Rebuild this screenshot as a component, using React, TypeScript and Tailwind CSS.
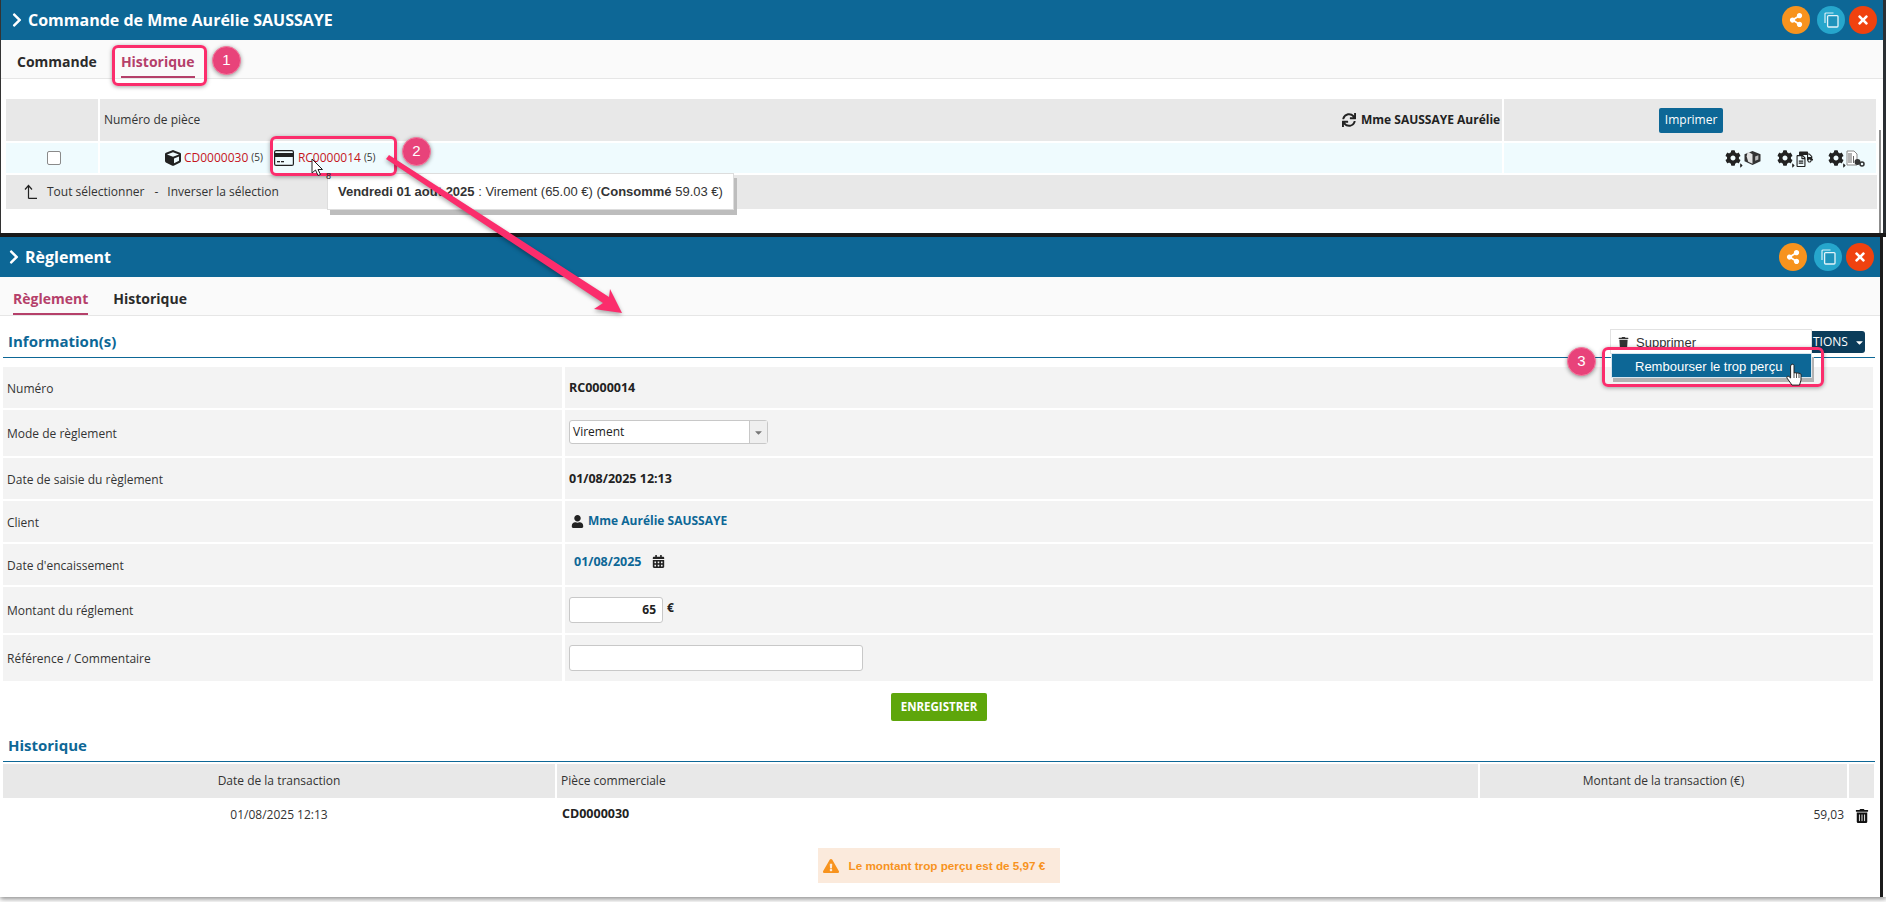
import React from "react";
import {
  FaChevronRight, FaShareAlt, FaTimes, FaCube, FaSync, FaCog, FaUser,
  FaCalendarAlt, FaExclamationTriangle, FaTrashAlt, FaTruck, FaRegFileAlt, FaCaretDown, FaTrash, FaCaretRight,
} from "react-icons/fa";

function CopyIcon() {
  return (
    <svg width="15" height="16" viewBox="0 0 15 16" fill="none">
      <path d="M9.5 1H2a1 1 0 0 0-1 1v9" stroke="#d6eef6" strokeWidth="1.2" />
      <rect x="3.6" y="3.6" width="10.4" height="11.4" rx="1" fill="#1f93bb" stroke="#e4f4f9" strokeWidth="1.3" />
    </svg>
  );
}

function WinButtons() {
  return (
    <div className="flex items-center">
      <div className="w-7 h-7 rounded-full bg-[#f7931e] flex items-center justify-center text-white text-[14px]"><FaShareAlt /></div>
      <div className="w-7 h-7 rounded-full bg-[#26a6cc] flex items-center justify-center ml-[7px]"><CopyIcon /></div>
      <div className="w-7 h-7 rounded-full bg-[#f0420f] flex items-center justify-center text-white text-[14px] ml-[4px]"><FaTimes /></div>
    </div>
  );
}

function Title({ children, pl }: { children: React.ReactNode; pl: string }) {
  return (
    <div className={`h-10 shrink-0 bg-[#0d6796] flex items-center justify-between pr-[6px] ${pl}`}>
      <div className="flex items-center text-white font-bold text-[16px]">
        <FaChevronRight className="text-[16px] mr-[3px]" />
        {children}
      </div>
      <WinButtons />
    </div>
  );
}

function Tabs({ items, active, gap, pl }: { items: string[]; active: string; gap: string; pl: string }) {
  return (
    <div className={`h-[39px] shrink-0 bg-[#fafafa] border-b border-[#e6e6e6] flex items-stretch font-bold text-[14px] text-[#2b2b2b] ${gap} ${pl}`}>
      {items.map((t) => (
        <div key={t} className={`flex items-center px-0 pt-[6px] ${t === active ? "text-[#b5406a] border-b-2 border-[#b5406a]" : "border-b-2 border-transparent"}`}>{t}</div>
      ))}
    </div>
  );
}

function SectionTitle({ children, pt }: { children: React.ReactNode; pt: string }) {
  return (
    <div className={pt}>
      <div className="ml-[3px] w-[1872px] h-[30px] border-b border-[#0d6796] pl-[5px] pb-[2px] flex items-center font-bold text-[15px] text-[#0d6796]">{children}</div>
    </div>
  );
}

function FormRow({ label, h, children, top }: { label: string; h: string; children: React.ReactNode; top?: string }) {
  return (
    <div className={`flex gap-[3px] ${h}`}>
      <div className="w-[559px] bg-[#f3f3f3] flex items-center pl-[4px] pt-[2px] text-[12px] text-[#333]">{label}</div>
      <div className={`w-[1308px] bg-[#f3f3f3] flex pl-[4px] text-[12px] text-[#222] ${top ?? "items-center"}`}>{children}</div>
    </div>
  );
}

function Pink({ className }: { className: string }) {
  return <div className={`absolute border-[3px] border-[#fb2d6c] rounded-[6px] shadow-[0_1px_4px_rgba(0,0,0,0.35)] ${className}`} />;
}

function Badge({ n, className }: { n: string; className: string }) {
  return (
    <div className={`absolute w-[29px] h-[29px] rounded-full bg-[#e8437a] border border-[#f7799f] shadow-[0_1px_4px_rgba(0,0,0,0.4)] flex items-center justify-center text-white text-[15px] font-['Liberation_Sans',sans-serif] ${className}`}>{n}</div>
  );
}

function Gear({ children }: { children: React.ReactNode }) {
  return (
    <div className="flex items-center">
      <div className="relative">
        <FaCog className="text-[16px] text-[#222]" />
        <FaCaretRight className="absolute left-[13px] top-[12px] text-[7px] text-[#222]" />
      </div>
      {children}
    </div>
  );
}

export default function App() {
  return (
    <div className="relative w-[1886px] h-[902px] overflow-hidden bg-white font-['Open_Sans',sans-serif] text-[#333]">
      {/* top window */}
      <div className="flex h-[233px]">
        <div className="w-[1883px] border-l border-[#333] bg-white flex flex-col">
          <Title pl="pl-[8px]">Commande de Mme Aurélie SAUSSAYE</Title>
          <Tabs items={["Commande", "Historique"]} active="Historique" gap="gap-[24px]" pl="pl-[16px]" />
          <div className="flex-1 flex">
            <div className="w-[1875px] pl-[5px] pt-[20px] text-[12px]">
              <div className="flex gap-[2px] h-[42px]">
                <div className="w-[92px] bg-[#e8e8e8]" />
                <div className="w-[1403px] bg-[#e8e8e8] flex items-center justify-between px-[4px] pr-[2px]">
                  <span>Numéro de pièce</span>
                  <span className="flex items-center font-bold text-[#222]"><FaSync className="text-[14px] mr-[5px]" />Mme SAUSSAYE Aurélie</span>
                </div>
                <div className="w-[372px] bg-[#e8e8e8] flex items-center justify-center">
                  <div className="w-[64px] h-[25px] ml-[2px] rounded-[2px] bg-[#0d6796] text-white text-[12px] flex items-center justify-center">Imprimer</div>
                </div>
              </div>
              <div className="flex gap-[2px] h-[30px] mt-[2px] bg-white">
                <div className="w-[92px] bg-[#effbfe] flex items-center justify-center pl-[4px]">
                  <div className="w-[14px] h-[14px] rounded-[2px] bg-white border border-[#8a8a8a]" />
                </div>
                <div className="w-[1403px] bg-[#effbfe] flex items-center pl-[65px] pb-[1px] text-[12px]">
                  <FaCube className="text-[16px] text-[#222] mr-[3px]" />
                  <span className="text-[#c5161d]">CD0000030</span>
                  <span className="text-[10px] ml-[3px]">(5)</span>
                  <svg className="ml-[11px] mr-[4px]" width="20" height="16" viewBox="0 0 20 16">
                    <rect x="0.6" y="0.6" width="18.8" height="14.8" rx="1.5" fill="none" stroke="#222" strokeWidth="1.2" />
                    <rect x="1" y="3" width="18" height="4" fill="#222" />
                    <rect x="3" y="11" width="3" height="1.3" fill="#222" />
                    <rect x="7" y="11" width="3" height="1.3" fill="#222" />
                  </svg>
                  <span className="text-[#c5161d]">RC0000014</span>
                  <span className="text-[10px] ml-[3px]">(5)</span>
                </div>
                <div className="w-[372px] bg-[#effbfe] flex items-center justify-end pr-[11px] gap-[15px]">
                  <Gear>
                    <svg className="ml-[2px]" width="19" height="16" viewBox="0 0 17 15">
                      <path d="M8.500 1 16 4 16 10.500 8.500 14 1 10.500 1 4Z" fill="#333" />
                      <path d="M4 1.500 8.500 4 8.500 13 4.500 11 3 6Z" fill="#e2e2e2" />
                      <path d="M11 6l3-1v4l-3 1Z" fill="#bbb" />
                    </svg>
                  </Gear>
                  <Gear>
                    <span className="relative w-[18px] h-[17px] ml-[2px]">
                      <FaTruck className="absolute right-0 top-0 text-[14px] text-[#222]" />
                      <FaRegFileAlt className="absolute left-0 bottom-0 text-[12px] bg-[#effbfe] text-[#222]" />
                    </span>
                  </Gear>
                  <Gear>
                    <svg className="ml-[2px]" width="19" height="17" viewBox="0 0 19 17">
                      <path d="M1 1H8L11 4V15H1Z" fill="#fff" stroke="#888" />
                      <path d="M3 3V13M5 3V13M7.500 6V13" stroke="#666" />
                      <circle cx="11.500" cy="12" r="3" fill="#333" />
                      <circle cx="16" cy="14" r="2" fill="none" stroke="#333" strokeWidth="1.500" />
                    </svg>
                  </Gear>
                </div>
              </div>
              <div className="h-[34px] mt-[2px] w-[1871px] bg-[#e8e8e8] flex items-center pl-[17px] pb-[1px] text-[12px]">
                <svg width="15" height="15" viewBox="0 0 15 15" fill="none" stroke="#222" strokeWidth="1.2"><path d="M5.500 14.400V2M2 5.500 5.500 1.500 9 5.500M5.500 14.400H14" /></svg>
                <span className="ml-[9px]">Tout sélectionner</span>
                <span className="ml-[10px]">-</span>
                <span className="ml-[9px]">Inverser la sélection</span>
              </div>
            </div>
            <div className="w-[2px] mt-[51px] ml-[3px] bg-[#8c8c8c]" />
          </div>
        </div>
        <div className="flex-1 bg-[#2a2f33]" />
      </div>
      <div className="h-[4px] bg-[#1b1b1b]" />
      {/* second window */}
      <div className="flex h-[660px] shadow-[0_2px_5px_rgba(0,0,0,0.45)]">
        <div className="w-[1880px] bg-white flex flex-col">
          <Title pl="pl-[6px]">Règlement</Title>
          <Tabs items={["Règlement", "Historique"]} active="Règlement" gap="gap-[25px]" pl="pl-[13px]" />
          <SectionTitle pt="pt-[12px]">Information(s)</SectionTitle>
          <div className="pl-[3px] mt-[9px] flex flex-col gap-[2px]">
            <FormRow label="Numéro" h="h-[41px]"><span className="font-bold text-[12.5px] pt-[2px]">RC0000014</span></FormRow>
            <FormRow label="Mode de règlement" h="h-[46px]">
              <div className="w-[199px] h-[24px] mb-[2px] bg-white border border-[#c8c8c8] rounded-[3px] flex items-center justify-between">
                <span className="pl-[3px]">Virement</span>
                <div className="w-[18px] h-full bg-[#efefef] border-l border-[#c8c8c8] flex items-center justify-center text-[#777] text-[11px]"><FaCaretDown /></div>
              </div>
            </FormRow>
            <FormRow label="Date de saisie du règlement" h="h-[41px]"><span className="font-bold text-[12.500px] pt-[2px]">01/08/2025 12:13</span></FormRow>
            <FormRow label="Client" h="h-[41px]" top="items-start pt-[11px]">
              <FaUser className="text-[13px] text-[#222] ml-[2px] mr-[4px] mt-[3px]" />
              <span className="font-bold text-[#0d6796]">Mme Aurélie SAUSSAYE</span>
            </FormRow>
            <FormRow label="Date d'encaissement" h="h-[41px]" top="items-start pt-[9px]">
              <span className="font-bold text-[#0d6796] ml-[5px] text-[12.5px]">01/08/2025</span>
              <FaCalendarAlt className="text-[13px] text-[#222] ml-[10px] mt-[2px]" />
            </FormRow>
            <FormRow label="Montant du réglement" h="h-[46px]" top="items-start pt-[10px]">
              <div className="w-[94px] h-[26px] bg-white border border-[#c8c8c8] rounded-[3px] flex items-center justify-end pr-[6px] font-bold">65</div>
              <span className="ml-[4px] mt-[2px] font-bold">€</span>
            </FormRow>
            <FormRow label="Référence / Commentaire" h="h-[46px]">
              <div className="w-[294px] h-[26px] mb-[1px] bg-white border border-[#c8c8c8] rounded-[3px]" />
            </FormRow>
          </div>
          <div className="flex justify-center mt-[12px]">
            <div className="w-[96px] h-[28px] rounded-[2px] bg-[#5ea60b] text-white font-bold text-[11.5px] flex items-center justify-center ml-[-2px]">ENREGISTRER</div>
          </div>
          <SectionTitle pt="pt-[11px]">Historique</SectionTitle>
          <div className="pl-[3px] mt-[2px] text-[12px]">
            <div className="flex gap-[2px] h-[34px]">
              <div className="w-[552px] bg-[#e8e8e8] flex items-center justify-center">Date de la transaction</div>
              <div className="w-[921px] bg-[#e8e8e8] flex items-center pl-[4px]">Pièce commerciale</div>
              <div className="w-[367px] bg-[#e8e8e8] flex items-center justify-center">Montant de la transaction (€)</div>
              <div className="w-[25px] bg-[#e8e8e8]" />
            </div>
            <div className="flex gap-[2px] h-[32px] items-center pt-[1px]">
              <div className="w-[552px] text-center">01/08/2025 12:13</div>
              <div className="w-[921px] pl-[5px] font-bold text-[12.5px] text-[#222]">CD0000030</div>
              <div className="w-[367px] text-right pr-[3px]">59,03</div>
              <div className="w-[25px] flex justify-center"><FaTrashAlt className="text-[14px] text-[#111] mt-[2px]" /></div>
            </div>
          </div>
          <div className="flex justify-center mt-[18px]">
            <div className="w-[242px] h-[35px] ml-[-3px] bg-[#fbeadc] flex items-center pl-[5px] whitespace-nowrap text-[#f7931e] font-bold text-[11.7px] font-['Liberation_Sans',sans-serif]">
              <FaExclamationTriangle className="text-[16px] mr-[10px]" />
              Le montant trop perçu est de 5,97 €
            </div>
          </div>
        </div>
        <div className="w-[3px] bg-[#1b1b1b]" />
      </div>

      {/* overlays */}
      <div className="absolute left-[327px] top-[173px] w-[407px] h-[37px] bg-white border border-[#ddd] shadow-[3px_5px_0_#bdbdbd] flex items-center pl-[10px] text-[13px] text-[#333] font-['Liberation_Sans',sans-serif] whitespace-nowrap">
        <b>Vendredi 01 août 2025</b>&nbsp;: Virement (65.00 €) (<b>Consommé</b>&nbsp;59.03 €)
      </div>

      <div className="absolute left-[1610px] top-[329px] w-[202px] h-[25px] bg-white border border-[#e2e2e2] flex items-center pl-[7px] pt-[2px] text-[13px] text-[#333] font-['Liberation_Sans',sans-serif]">
        <FaTrash className="text-[11px] mr-[7px] text-[#333]" />Supprimer
      </div>
      <div className="absolute left-[1812px] top-[331px] w-[53px] h-[22px] bg-[#0b3c5a] rounded-r-[3px] flex items-center text-white text-[12px] pl-[1px]">
        TIONS<FaCaretDown className="text-[11px] ml-[6px]" />
      </div>
      <div className="absolute left-[1611px] top-[353px] w-[201px] h-[25px] bg-[#0d6796] border border-[#d9e6ee] shadow-[2px_4px_0_#b3b3b3] flex items-center pl-[23px] pt-[2px] text-[13px] text-white font-['Liberation_Sans',sans-serif] whitespace-nowrap">
        Rembourser le trop perçu
      </div>

      <Pink className="left-[112px] top-[45px] w-[95px] h-[41px]" />
      <Pink className="left-[270px] top-[136px] w-[127px] h-[40px]" />
      <Pink className="left-[1602px] top-[347px] w-[222px] h-[40px]" />
      <Badge n="1" className="left-[212px] top-[46px]" />
      <Badge n="2" className="left-[402px] top-[137px]" />
      <Badge n="3" className="left-[1567px] top-[347px]" />

      <svg className="absolute left-0 top-0 pointer-events-none drop-shadow-[0_2px_2px_rgba(0,0,0,0.35)]" width="1886" height="902">
        <path d="M386 159 389 155 609 297 610 289 622 313 594 309 603 303Z" fill="#fb2d6c" />
      </svg>

      {/* pointer cursor */}
      <svg className="absolute left-[311px] top-[158px]" width="14" height="20" viewBox="0 0 14 20">
        <path d="M1 1V15L4.500 12 7 17.500 9.500 16.500 7 11.500H11.500Z" fill="#fff" stroke="#222" strokeWidth="1" />
      </svg>
      <span className="absolute left-[326px] top-[172px] text-[9px] leading-none text-[#222] font-['Liberation_Sans',sans-serif]">8</span>
      {/* hand cursor */}
      <svg className="absolute left-[1785px] top-[363px]" width="20" height="24" viewBox="0 0 20 24">
        <path d="M6 2c1-1.400 3-1 3 .6V10l1-.4 1 .4 1-.2 1 .4 1-.1 2 1v6l-1.500 5H7l-5-7c-.8-1.500 1-2.500 2-1.500L5.600 15V3z" fill="#fff" stroke="#222" strokeWidth="1" />
        <path d="M9 10v5M11.500 10v5M14 10.500V15" stroke="#222" strokeWidth="0.8" />
      </svg>
    </div>
  );
}
